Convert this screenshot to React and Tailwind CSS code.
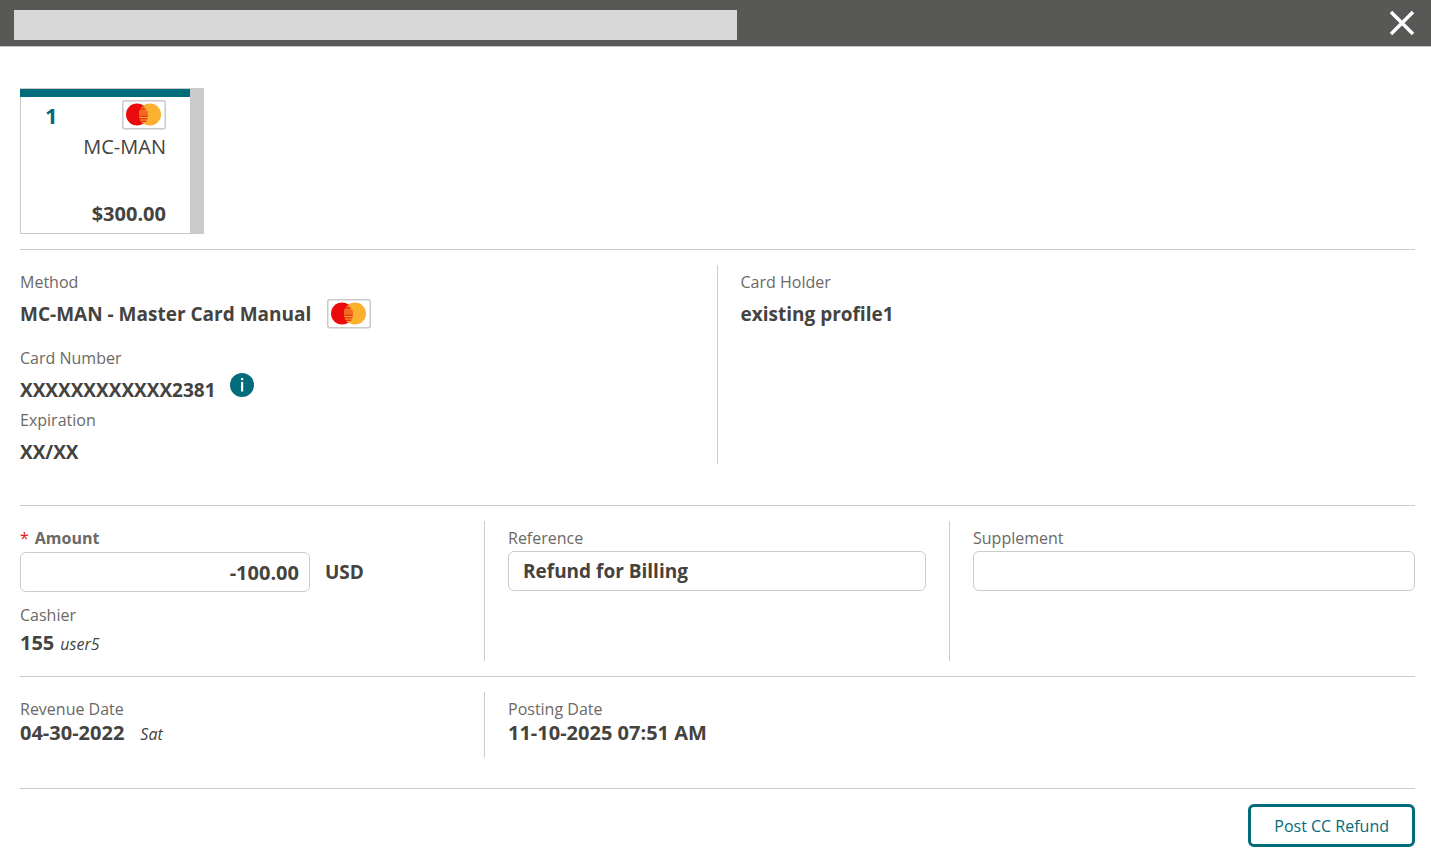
import { useState } from "react";

const payments = [{ id: 1, code: "MC-MAN", amount: "$300.00" }];

function MasterCardLogo() {
    return (
        <svg className="w-11 h-[30px] shrink-0" viewBox="0 0 44 30" aria-label="Master Card" role="img">
            <rect x="0.75" y="0.75" width="42.5" height="28" rx="2" fill="#fff" stroke="#cacacb" strokeWidth="1.5" />
            <circle cx="15" cy="14.5" r="11" fill="#eb0a0b" />
            <circle cx="28" cy="14.5" r="11" fill="#fbb030" />
            {/* Overlap of the two circles */}
            <path d="M21.500 5.600a11 11 0 0 1 0 17.800a11 11 0 0 1 0-17.800z" fill="#f26a21" />
            <path d="M22 7.500h3.500M23 10h3.500M18 17.500h9M18 20h8M19.500 22.300h4.500" stroke="#fbb030" strokeWidth="1" />
            <path d="M18 9h5M17.500 16.300h8.300M18 18.800h7.500M19.500 21.200h5" stroke="#e3230f" strokeWidth="1" />
        </svg>
    );
}

function InfoIcon() {
    return (
        <svg className="w-6 h-6" viewBox="0 0 24 24" aria-hidden="true">
            <circle cx="12" cy="12" r="12" fill="#036c7a" />
            <rect x="11" y="5" width="2.200" height="2.200" fill="#fff" />
            <rect x="11" y="9" width="2.200" height="9.500" fill="#fff" />
        </svg>
    );
}

function Label({ children }) {
    return <p className="text-base leading-6 text-[#6b6966]">{children}</p>;
}

function Value({ children }) {
    return <p className="text-[19px] leading-6 font-bold whitespace-nowrap">{children}</p>;
}

function NumericValue({ children }) {
    return <p className="text-xl leading-6 font-bold whitespace-nowrap">{children}</p>;
}

export default function App() {
    const [amount, setAmount] = useState("-100.00");
    const [reference, setReference] = useState("Refund for Billing");
    const [supplement, setSupplement] = useState("");

    return (
        <div className="min-h-screen bg-white text-[#444340] font-['Open_Sans','Noto_Sans',sans-serif]">

            {/* Title bar */}
            <header className="h-[47px] bg-[#585856] border-b border-[#c8c8c8] flex items-center justify-between pl-3.5 pr-4">
                <div className="w-[51.6%] h-[30px] mt-1 bg-[#d7d7d7]"></div>
                <button type="button" aria-label="Close" className="p-0">
                    <svg className="w-[26px] h-[26px]" viewBox="0 0 26 26" fill="none" stroke="#fff" strokeWidth="3.500">
                        <path d="M2 2l22 22M24 2L2 24" />
                    </svg>
                </button>
            </header>

            <main className="pl-5 pr-4 pt-[41px]">

                {/* Payment tiles */}
                <section className="pb-[15px] border-b border-[#ccc] flex">
                    {payments.map((payment) => (
                        <button
                            key={payment.id}
                            type="button"
                            className="w-[184px] h-[146px] border-y border-r-[14px] border-[#cacaca] flex flex-col"
                        >
                            <span className="w-full h-2 bg-[#036c7a]"></span>
                            <span className="w-full flex-1 flex flex-col items-end px-6 pt-[3px] pb-[7px] border-l border-[#cacaca]">
                                <span className="w-full flex items-center justify-between">
                                    <span className="text-[22px] leading-6 font-bold text-[#036c7a]">{payment.id}</span>
                                    <MasterCardLogo />
                                </span>
                                <span className="mt-[5px] text-xl leading-6">{payment.code}</span>
                                <span className="mt-auto text-xl leading-6 font-bold">{payment.amount}</span>
                            </span>
                        </button>
                    ))}
                </section>

                {/* Card details */}
                <section className="pt-[15px] pb-[41px] border-b border-[#ccc] grid grid-cols-2">
                    <div className="pt-[5px] border-r border-[#ccc]">
                        <Label>Method</Label>
                        <div className="mt-2 h-6 flex items-center gap-4">
                            <Value>MC-MAN - Master Card Manual</Value>
                            <MasterCardLogo />
                        </div>
                        <div className="mt-5">
                            <Label>Card Number</Label>
                            <div className="mt-2 h-6 flex items-center gap-3.5">
                                <Value>XXXXXXXXXXXX2381</Value>
                                <button type="button" aria-label="Card information" className="mb-2.5">
                                    <InfoIcon />
                                </button>
                            </div>
                        </div>
                        <div className="mt-1.5 space-y-2">
                            <Label>Expiration</Label>
                            <Value>XX/XX</Value>
                        </div>
                    </div>
                    <div className="pt-[5px] pl-[23px] space-y-2">
                        <Label>Card Holder</Label>
                        <Value>existing profile1</Value>
                    </div>
                </section>

                {/* Refund entry */}
                <section className="py-[15px] border-b border-[#ccc] grid grid-cols-3">
                    <div className="pt-[5px] pb-1.5 border-r border-[#ccc]">
                        <label htmlFor="amount" className="block text-base leading-6 font-bold text-[#6b6966]">
                            <span className="mr-1.5 font-normal text-[#e8100c]">*</span>
                            Amount
                        </label>
                        <div className="mt-0.5 flex items-center gap-[15px]">
                            <input
                                id="amount"
                                type="text"
                                required
                                value={amount}
                                onChange={(e) => setAmount(e.target.value)}
                                className="w-[290px] h-10 px-2.5 border border-[#ccc] rounded-md text-xl font-bold text-right"
                            />
                            <Value>USD</Value>
                        </div>
                        <div className="mt-[11px]">
                            <Label>Cashier</Label>
                            <div className="mt-1 h-6 flex items-baseline gap-1.5">
                                <NumericValue>155</NumericValue>
                                <span className="text-base leading-6 italic">user5</span>
                            </div>
                        </div>
                    </div>
                    <div className="pt-[5px] px-[23px] border-r border-[#ccc]">
                        <label htmlFor="reference" className="block text-base leading-6 text-[#6b6966]">Reference</label>
                        <input
                            id="reference"
                            type="text"
                            value={reference}
                            onChange={(e) => setReference(e.target.value)}
                            className="mt-px w-full h-10 px-3.5 border border-[#ccc] rounded-md text-[19px] font-bold"
                        />
                    </div>
                    <div className="pt-[5px] pl-[23px]">
                        <label htmlFor="supplement" className="block text-base leading-6 text-[#6b6966]">Supplement</label>
                        <input
                            id="supplement"
                            type="text"
                            value={supplement}
                            onChange={(e) => setSupplement(e.target.value)}
                            className="mt-px w-full h-10 px-3.5 border border-[#ccc] rounded-md text-[19px] font-bold"
                        />
                    </div>
                </section>

                {/* Dates */}
                <section className="pt-[15px] pb-[30px] border-b border-[#ccc] grid grid-cols-3">
                    <div className="pt-[5px] pb-[13px] border-r border-[#ccc]">
                        <Label>Revenue Date</Label>
                        <div className="h-6 flex items-baseline gap-4">
                            <NumericValue>04-30-2022</NumericValue>
                            <span className="text-base leading-6 italic">Sat</span>
                        </div>
                    </div>
                    <div className="pt-[5px] pl-[23px]">
                        <Label>Posting Date</Label>
                        <NumericValue>11-10-2025 07:51 AM</NumericValue>
                    </div>
                </section>

                {/* Actions */}
                <div className="pt-[15px] pb-2 flex justify-end">
                    <button
                        type="button"
                        className="h-[43px] px-[23px] border-3 border-[#036c7a] rounded-md text-base text-[#036c7a]"
                    >
                        Post CC Refund
                    </button>
                </div>
            </main>
        </div>
    );
}
